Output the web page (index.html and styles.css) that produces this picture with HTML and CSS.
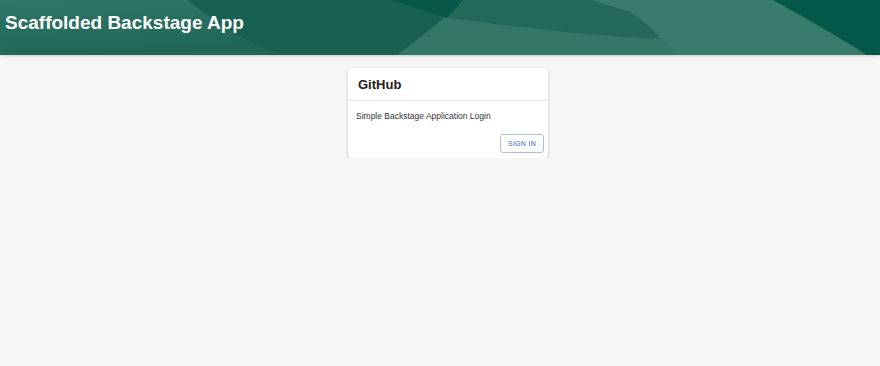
FILE: index.html
```html
<!DOCTYPE html>
<html lang="en">
<head>
    <meta charset="UTF-8">
    <meta name="viewport" content="width=device-width, initial-scale=1.0">
    <title>Scaffolded Backstage App</title>
    <link rel="stylesheet" href="styles.css">
</head>
<body>
    <header class="page-header">
        <!-- decorative waves behind the title -->
        <svg class="header-waves" viewBox="0 0 880 55" preserveAspectRatio="none">
            <defs>
                <linearGradient id="leftShade" x1="0" y1="0" x2="0.3" y2="1">
                    <stop offset="0" stop-color="#317767"/>
                    <stop offset="1" stop-color="#1e6657"/>
                </linearGradient>
            </defs>
            <rect width="880" height="55" fill="#337767"/>
            <path d="M0,0 L187,0 C215,22 245,42 280,55 L0,55 Z" fill="url(#leftShade)"/>
            <path d="M187,0 L463,0 C440,22 420,38 397,55 L280,55 C245,42 215,22 187,0 Z" fill="#186152"/>
            <path d="M390,0 L463,0 C458,7 453,12 447,18 C428,12 410,6 390,0 Z" fill="#08584a"/>
            <path d="M463,0 L593,0 C610,5 622,9 630,12 C645,22 655,32 660,39 C600,36 520,28 447,18 C453,12 458,7 463,0 Z" fill="#23695a"/>
            <path d="M593,0 L773,0 C810,20 840,38 867,55 L677,55 C665,38 648,22 630,12 C618,8 604,4 593,0 Z" fill="#387c6d"/>
            <path d="M773,0 L880,0 L880,55 L867,55 C840,38 810,20 773,0 Z" fill="#03584a"/>
        </svg>
        <h1 class="header-title">Scaffolded Backstage App</h1>
    </header>

    <main class="content">
        <div class="login-card">
            <div class="card-header">GitHub</div>
            <div class="card-body">Simple Backstage Application Login</div>
            <div class="card-actions">
                <button class="sign-in">SIGN IN</button>
            </div>
        </div>
    </main>
</body>
</html>
```

FILE: styles.css
```css
body {
    margin: 0;
    background-color: #f6f6f6;
    font-family: "Liberation Sans", Arial, sans-serif;
}

.page-header {
    position: relative;
    height: 55px;
    overflow: hidden;
    box-shadow: 0 1px 3px rgba(0,0,0,0.18);
}

.header-waves {
    position: absolute;
    left: 0;
    top: 0;
    width: 100%;
    height: 100%;
}

.header-title {
    position: relative;
    margin: 0;
    padding: 12px 0 0 5px;
    font-size: 19px;
    font-weight: bold;
    color: #ffffff;
    line-height: 22px;
}

.content {
    display: flex;
    justify-content: center;
    padding: 13px 0 0 16px;
}

.login-card {
    width: 200px;
    background-color: #ffffff;
    border-radius: 3px;
    box-shadow: 0 1px 2px rgba(0,0,0,0.25), 0 1px 4px rgba(0,0,0,0.08);
}

.card-header {
    height: 32px;
    padding-left: 10px;
    line-height: 33px;
    font-size: 13px;
    font-weight: bold;
    color: #1f1f1f;
    border-bottom: 1px solid #e9e9e9;
}

.card-body {
    padding: 10px 8px 0 8px;
    font-size: 8.5px;
    color: #333333;
}

.card-actions {
    display: flex;
    justify-content: flex-end;
    padding: 13px 4px 5px 0;
}

.sign-in {
    width: 44px;
    height: 19px;
    padding: 0;
    border: 1px solid #aabde6;
    border-radius: 3px;
    background-color: #ffffff;
    color: #3566c9;
    font-family: "Liberation Sans", Arial, sans-serif;
    font-size: 7px;
    letter-spacing: 0.3px;
    cursor: pointer;
}
```
